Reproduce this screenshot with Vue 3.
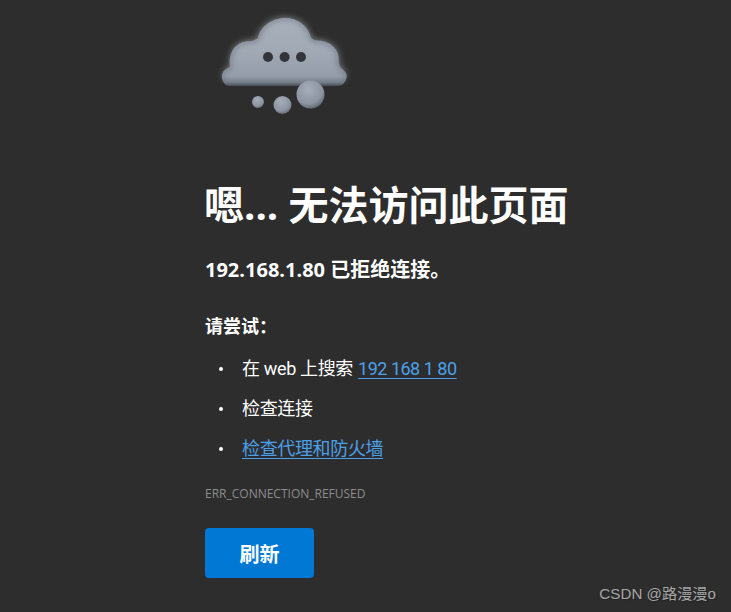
<script setup>
const items = [
  { id: 1, before: '在 web 上搜索 ', link: '192 168 1 80', latin: true },
  { id: 2, before: '检查连接', link: '', latin: false },
  { id: 3, before: '', link: '检查代理和防火墙', latin: false },
]
</script>

<template>
  <main class="page">
    <svg class="cloud" width="170" height="125" viewBox="0 0 170 125" aria-hidden="true">
      <defs>
        <path id="cloud-shape" d="M30 86C25 86 22 81 22 76.500C22 72 25 69 30 67C28 53 35 43 46 41.500C51 41 55 41 58 38C60 27 72 18 85 18C98 18 108 26 111 38C114 41 118 40.500 122 41C132 43 139 50 138.500 60C138.500 65 140 67 142 69C146 72 147 75 146.500 77C146 82 142 86 138 86Z" />
        <clipPath id="cloud-clip"><use href="#cloud-shape" /></clipPath>
        <linearGradient id="body" x1="0" y1="0" x2="0" y2="1">
          <stop offset="0" stop-color="#a8b0bb" />
          <stop offset="0.5" stop-color="#a0a9b4" />
          <stop offset="0.86" stop-color="#939ca8" />
          <stop offset="0.95" stop-color="#767f8a" />
          <stop offset="1" stop-color="#2f3338" />
        </linearGradient>
        <radialGradient id="ball" cx="0.42" cy="0.32" r="0.78">
          <stop offset="0" stop-color="#a5adb8" />
          <stop offset="0.65" stop-color="#8b94a0" />
          <stop offset="1" stop-color="#50565f" />
        </radialGradient>
        <filter id="glow" x="-30%" y="-30%" width="160%" height="160%">
          <feGaussianBlur stdDeviation="3.500" />
        </filter>
        <filter id="soft" x="-20%" y="-20%" width="140%" height="140%">
          <feGaussianBlur stdDeviation="2.500" />
        </filter>
      </defs>
      <path class="halo" filter="url(#glow)" d="M30 79C25 79 23 78 23 76.500C23 72 26 69 31 67C29 53 35 43 46 41.500C51 41 55 41 58 38C60 27 72 18 85 18C98 18 108 26 111 38C114 41 118 40.500 122 41C132 43 139 50 138.500 60C138.500 65 140 67 142 69C145 72 146 75 145.500 77C145 78 142 79 138 79Z" />
      <use href="#cloud-shape" fill="url(#body)" />
      <g clip-path="url(#cloud-clip)">
        <use href="#cloud-shape" class="rim" filter="url(#soft)" />
      </g>
      <circle cx="68" cy="57" r="5" fill="#32363b" />
      <circle cx="84.600" cy="57" r="5" fill="#32363b" />
      <circle cx="101" cy="57" r="5" fill="#32363b" />
      <circle cx="58" cy="102" r="6" fill="url(#ball)" />
      <circle cx="82.500" cy="105" r="9" fill="url(#ball)" />
      <circle cx="110.500" cy="94.500" r="14" fill="url(#ball)" />
    </svg>

    <h1 class="title">嗯... 无法访问此页面</h1>
    <p class="subtitle">192.168.1.80 已拒绝连接。</p>
    <p class="try">请尝试：</p>
    <ul class="tips">
      <li v-for="item in items" :key="item.id"><span>{{ item.before }}<a v-if="item.link" class="link" :class="{ latin: item.latin }">{{ item.link }}</a></span></li>
    </ul>
    <p class="code">ERR_CONNECTION_REFUSED</p>
    <button class="refresh" type="button">刷新</button>
    <span class="mark">CSDN @路漫漫o</span>
  </main>
</template>

<style>
html, body { margin: 0; background: #2d2d2d; }
</style>

<style scoped>
.page {
  position: relative;
  box-sizing: border-box;
  width: 731px;
  height: 612px;
  overflow: hidden;
  padding-left: 205px;
  background: #2d2d2d;
  color: #fff;
  font-family: "Open Sans", "Noto Sans CJK SC", sans-serif;
}
.cloud { display: block; margin-left: -5px; }
.title {
  margin: 54px 0 0 -1px;
  font-size: 40px;
  line-height: 52px;
  font-weight: 700;
}
.subtitle {
  margin: 26px 0 0;
  font-size: 20px;
  line-height: 26px;
  font-weight: 700;
}
.try {
  margin: 30px 0 0;
  font-size: 18px;
  line-height: 26px;
  font-weight: 700;
}
.tips {
  margin: 17px 0 0;
  padding: 0 0 0 14px;
  list-style: none;
  font-family: Roboto, "Noto Sans CJK SC", sans-serif;
  font-size: 18px;
  line-height: 26px;
  letter-spacing: -0.35px;
}
.tips li {
  display: flex;
  align-items: center;
  margin-bottom: 14px;
}
.tips li::before {
  content: "";
  flex: none;
  width: 4px;
  height: 4px;
  margin-right: 19px;
  border-radius: 50%;
  background: #fff;
}
.link {
  color: #4ba0ea;
  text-decoration: underline;
  text-underline-offset: 3px;
  text-decoration-thickness: 1px;
}
.link.latin {
  margin-left: 1px;
  letter-spacing: -0.5px;
}
.code {
  margin: 24px 0 0;
  font-size: 12px;
  line-height: 16px;
  color: #8c8c8c;
}
.refresh {
  display: block;
  width: 109px;
  height: 50px;
  margin-top: 26px;
  padding: 0;
  border: 0;
  border-radius: 4px;
  background: #0078d4;
  color: #fff;
  font: 700 20px "Open Sans", "Noto Sans CJK SC", sans-serif;
}
.mark {
  position: absolute;
  right: 15px;
  bottom: 8px;
  font-family: "Liberation Sans", "Noto Sans CJK SC", sans-serif;
  font-size: 15.2px;
  line-height: 20px;
  color: #a6a6a6;
  text-shadow: 1px 1px 1px #222;
}
.halo { fill: #c9d0d9; opacity: 0.6; }
.rim { fill: none; stroke: #6d7683; stroke-width: 4; opacity: 0.7; }
</style>
